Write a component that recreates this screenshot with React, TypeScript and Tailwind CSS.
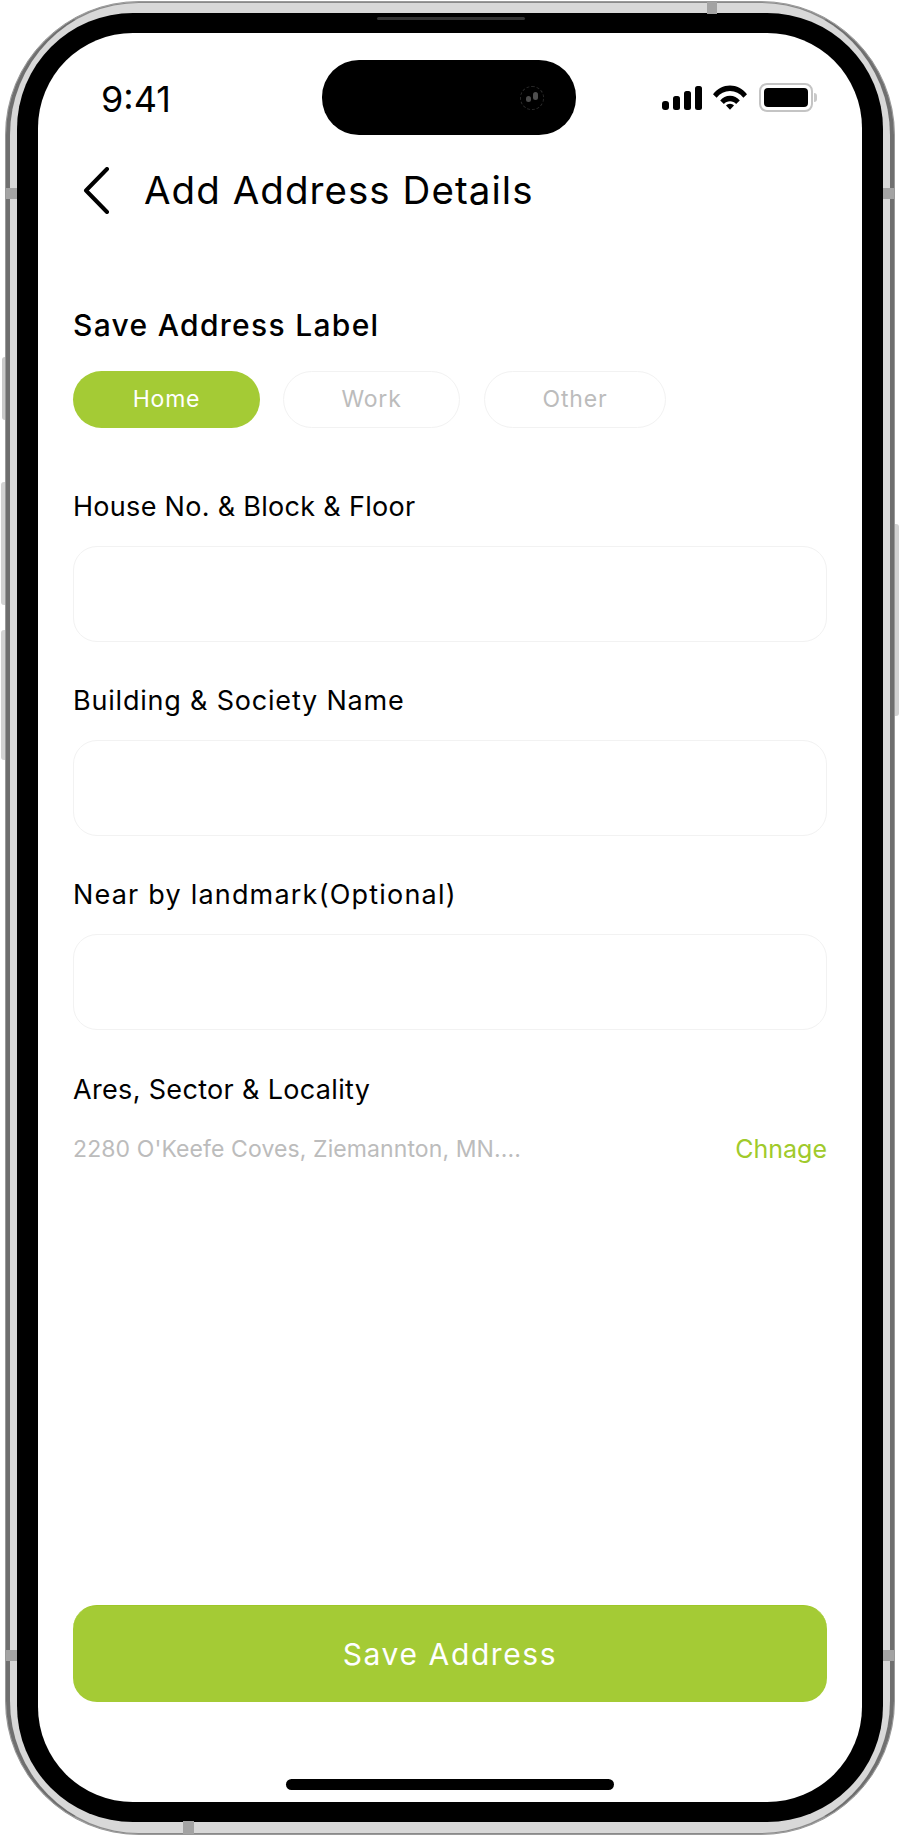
const font = "font-['Inter','Noto_Sans',sans-serif]";

function Field({ label, tracking, first }: { label: string; tracking: string; first?: boolean }) {
  return (
    <div className={first ? "mt-[62px]" : "mt-[42px]"}>
      <p className={`h-[34px] text-[27px] leading-[34px] text-black ${tracking}`}>{label}</p>
      <div className="mt-[22px] h-[96px] rounded-[24px] border border-[#f2f2f2] bg-white" />
    </div>
  );
}

function StatusIcons() {
  return (
    <div className="flex items-center">
      {/* signal */}
      <svg width="40" height="24" viewBox="0 0 40 24" fill="#000">
        <rect x="0" y="15" width="7" height="9" rx="3" />
        <rect x="11" y="10" width="7" height="14" rx="2.5" />
        <rect x="22" y="5" width="7" height="19" rx="2.5" />
        <rect x="33" y="0" width="7" height="24" rx="2.5" />
      </svg>
      {/* wifi */}
      <svg className="ml-[11px]" width="34" height="25" viewBox="0 0 34 25" fill="#000">
        <path d="M0 9.2C4.4 3.6 10.4 0.5 17 0.5s12.6 3.1 17 8.7l-3.6 3.5C26.9 8.3 22.3 6 17 6S7.1 8.3 3.6 12.7z" />
        <path d="M7.2 15.6C9.6 12.6 13.1 10.8 17 10.8s7.4 1.8 9.8 4.8l-3.7 3.4C21.6 17.200 19.400 16.200 17 16.200s-4.600 1-6.100 2.800z" />
        <path d="M13 20.500c1-1.100 2.500-1.800 4-1.800s3 .7 4 1.800L17 24.800z" />
      </svg>
      {/* battery */}
      <div className="ml-[12px] flex items-center">
        <div className="h-[29px] w-[54px] rounded-[8px] border-[2px] border-[#c4c4c4] p-[3px]">
          <div className="h-full w-full rounded-[4px] bg-black" />
        </div>
        <div className="ml-[1px] h-[9px] w-[3px] rounded-r-[3px] bg-[#c9c9c9]" />
      </div>
    </div>
  );
}

function Screen() {
  return (
    <div className={`flex h-full flex-col rounded-[95px] bg-white pt-[27px] ${font}`}>
      {/* status bar */}
      <div className="flex h-[75px] items-center">
        <div className="w-[284px] pt-[3px] pl-[63px] text-[36px] leading-[40px] text-black">9:41</div>
        <div className="flex h-[75px] w-[254px] items-center justify-end rounded-[37px] bg-black pr-[32px]">
          <div className="flex h-[24px] w-[24px] items-center justify-center gap-[2px] rounded-full border border-dashed border-[#2a2a2a]">
            <div className="mt-[3px] h-[6px] w-[5px] rounded-full bg-[#4a4a4a]" />
            <div className="mb-[3px] h-[8px] w-[5px] rounded-full bg-[#4f4f4f]" />
          </div>
        </div>
        <div className="flex-1 pl-[86px]">
          <StatusIcons />
        </div>
      </div>

      <div className="flex flex-1 flex-col px-[35px] pb-[12px]">
        {/* header */}
        <div className="mt-[30px] flex h-[50px] items-center">
          <svg className="ml-[10px]" width="27" height="47" viewBox="0 0 27 47" fill="none">
            <path d="M24 2 L3 23.500 L24 45" stroke="#000" strokeWidth="4" strokeLinecap="round" strokeLinejoin="round" />
          </svg>
          <h1 className="ml-[34px] text-[38.500px] leading-[50px] font-normal tracking-[1.05px] text-black">Add Address Details</h1>
        </div>

        <h2 className="mt-[93px] h-[34px] text-[30px] leading-[34px] font-medium tracking-[1.3px] text-black">Save Address Label</h2>

        <div className="mt-[29px] flex text-[23px] tracking-[0.8px]">
          <div className="flex h-[57px] w-[187px] items-center justify-center rounded-full bg-[#a4cb35] text-white">Home</div>
          <div className="ml-[23px] flex h-[57px] w-[177px] items-center justify-center rounded-full border border-[#f2f2f2] text-[#bcbcbc]">Work</div>
          <div className="ml-[24px] flex h-[57px] w-[182px] items-center justify-center rounded-full border border-[#f2f2f2] text-[#bcbcbc]">Other</div>
        </div>

        <Field first label="House No. & Block & Floor" tracking="tracking-[0.3px]" />
        <Field label="Building & Society Name" tracking="tracking-[0.8px]" />
        <Field label="Near by landmark(Optional)" tracking="tracking-[1.2px]" />

        <p className="mt-[43px] h-[34px] text-[27px] leading-[34px] tracking-[0.33px] text-black">Ares, Sector &amp; Locality</p>
        <div className="mt-[25px] flex h-[34px] items-center justify-between leading-[34px]">
          <span className="text-[23px] tracking-[0.1px] text-[#bcbcbc]">2280 O'Keefe Coves, Ziemannton, MN....</span>
          <span className="text-[25px] text-[#a0ca2b]">Chnage</span>
        </div>

        <button className="mt-auto flex h-[97px] w-full items-center justify-center rounded-[24px] border-t border-[#9dc727] bg-[#a4cb35] text-[30px] tracking-[1.6px] text-white">
          Save Address
        </button>

        <div className="mx-auto mt-[77px] h-[11px] w-[328px] rounded-full bg-black" />
      </div>
    </div>
  );
}

export default function App() {
  return (
    <div className="relative h-[1836px] w-[900px] overflow-hidden bg-white pt-[1px] pr-[5px] pl-[5px]">
      {/* side buttons */}
      <div className="absolute top-[357px] left-[2px] h-[63px] w-[4px] rounded-l-[3px] bg-[#c9c9c9]" />
      <div className="absolute top-[482px] left-[1px] h-[123px] w-[5px] rounded-l-[3px] bg-[#d2d2d2]" />
      <div className="absolute top-[630px] left-[1px] h-[130px] w-[5px] rounded-l-[3px] bg-[#d2d2d2]" />
      <div className="absolute top-[524px] right-[1px] h-[192px] w-[5px] rounded-r-[3px] bg-[#d2d2d2]" />

      {/* phone body */}
      <div className="relative h-[1834px] rounded-[134px] border border-[#9a9a9a] bg-[#c4c4c4]">
        <div className="h-full rounded-[133px] border-x-[4px] border-y-[1px] border-x-[#6f6f6f] border-y-[#8a8a8a] bg-[#d8d8d8] px-[7px] pt-[10px] pb-[11px]">
          <div className="h-full rounded-[116px] bg-black px-[21px] py-[20px]">
            <Screen />
          </div>
        </div>

        {/* antenna bands + speaker */}
        <div className="absolute top-0 left-[701px] h-[12px] w-[10px] bg-[#a3a3a3]" />
        <div className="absolute top-[186px] left-0 h-[11px] w-[11px] bg-[#a3a3a3]" />
        <div className="absolute top-[186px] right-0 h-[11px] w-[11px] bg-[#a3a3a3]" />
        <div className="absolute top-[1648px] left-0 h-[11px] w-[11px] bg-[#a3a3a3]" />
        <div className="absolute top-[1648px] right-0 h-[11px] w-[11px] bg-[#a3a3a3]" />
        <div className="absolute bottom-0 left-[177px] h-[13px] w-[11px] bg-[#a3a3a3]" />
        <div className="absolute top-[15px] left-[371px] h-[3px] w-[148px] rounded-full bg-[#333333]" />
      </div>
    </div>
  );
}
